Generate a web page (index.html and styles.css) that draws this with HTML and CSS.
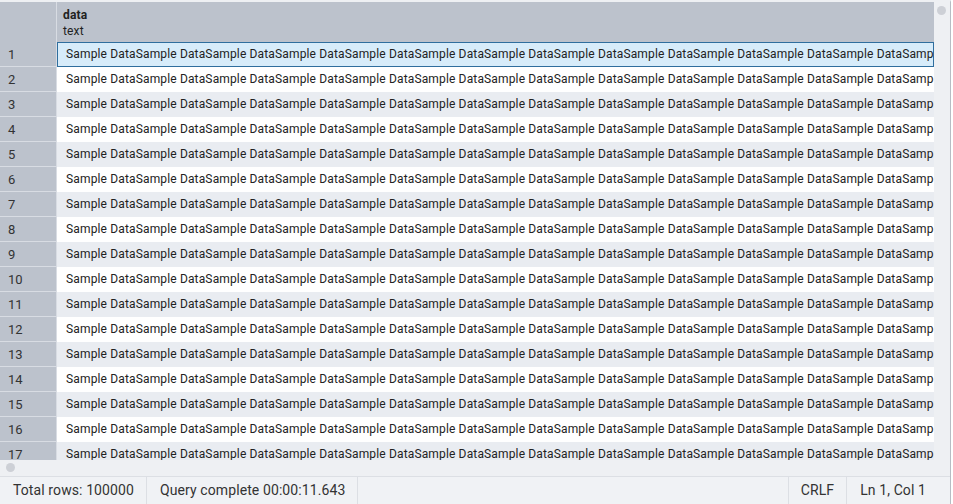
FILE: index.html
```html
<!DOCTYPE html>
<html lang="en">
<head>
    <meta charset="UTF-8">
    <title>Query result</title>
    <link rel="stylesheet" href="styles.css">
</head>
<body>
    <div class="app">
        <div class="grid-area">
            <div class="grid">
                <div class="grid-head">
                    <div class="corner"></div>
                    <div class="col-head">
                        <div class="col-name">data</div>
                        <div class="col-type">text</div>
                    </div>
                </div>
                <div class="rows">
                    <div class="row selected"><div class="num">1</div><div class="cell">Sample DataSample DataSample DataSample DataSample DataSample DataSample DataSample DataSample DataSample DataSample DataSample DataSample DataSample Data</div></div>
                    <div class="row"><div class="num">2</div><div class="cell">Sample DataSample DataSample DataSample DataSample DataSample DataSample DataSample DataSample DataSample DataSample DataSample DataSample DataSample Data</div></div>
                    <div class="row"><div class="num">3</div><div class="cell">Sample DataSample DataSample DataSample DataSample DataSample DataSample DataSample DataSample DataSample DataSample DataSample DataSample DataSample Data</div></div>
                    <div class="row"><div class="num">4</div><div class="cell">Sample DataSample DataSample DataSample DataSample DataSample DataSample DataSample DataSample DataSample DataSample DataSample DataSample DataSample Data</div></div>
                    <div class="row"><div class="num">5</div><div class="cell">Sample DataSample DataSample DataSample DataSample DataSample DataSample DataSample DataSample DataSample DataSample DataSample DataSample DataSample Data</div></div>
                    <div class="row"><div class="num">6</div><div class="cell">Sample DataSample DataSample DataSample DataSample DataSample DataSample DataSample DataSample DataSample DataSample DataSample DataSample DataSample Data</div></div>
                    <div class="row"><div class="num">7</div><div class="cell">Sample DataSample DataSample DataSample DataSample DataSample DataSample DataSample DataSample DataSample DataSample DataSample DataSample DataSample Data</div></div>
                    <div class="row"><div class="num">8</div><div class="cell">Sample DataSample DataSample DataSample DataSample DataSample DataSample DataSample DataSample DataSample DataSample DataSample DataSample DataSample Data</div></div>
                    <div class="row"><div class="num">9</div><div class="cell">Sample DataSample DataSample DataSample DataSample DataSample DataSample DataSample DataSample DataSample DataSample DataSample DataSample DataSample Data</div></div>
                    <div class="row"><div class="num">10</div><div class="cell">Sample DataSample DataSample DataSample DataSample DataSample DataSample DataSample DataSample DataSample DataSample DataSample DataSample DataSample Data</div></div>
                    <div class="row"><div class="num">11</div><div class="cell">Sample DataSample DataSample DataSample DataSample DataSample DataSample DataSample DataSample DataSample DataSample DataSample DataSample DataSample Data</div></div>
                    <div class="row"><div class="num">12</div><div class="cell">Sample DataSample DataSample DataSample DataSample DataSample DataSample DataSample DataSample DataSample DataSample DataSample DataSample DataSample Data</div></div>
                    <div class="row"><div class="num">13</div><div class="cell">Sample DataSample DataSample DataSample DataSample DataSample DataSample DataSample DataSample DataSample DataSample DataSample DataSample DataSample Data</div></div>
                    <div class="row"><div class="num">14</div><div class="cell">Sample DataSample DataSample DataSample DataSample DataSample DataSample DataSample DataSample DataSample DataSample DataSample DataSample DataSample Data</div></div>
                    <div class="row"><div class="num">15</div><div class="cell">Sample DataSample DataSample DataSample DataSample DataSample DataSample DataSample DataSample DataSample DataSample DataSample DataSample DataSample Data</div></div>
                    <div class="row"><div class="num">16</div><div class="cell">Sample DataSample DataSample DataSample DataSample DataSample DataSample DataSample DataSample DataSample DataSample DataSample DataSample DataSample Data</div></div>
                    <div class="row"><div class="num">17</div><div class="cell">Sample DataSample DataSample DataSample DataSample DataSample DataSample DataSample DataSample DataSample DataSample DataSample DataSample DataSample Data</div></div>
                </div>
                <div class="hscroll"><span class="thumb"></span></div>
            </div>
            <div class="vscroll"><span class="thumb"></span></div>
        </div>
        <div class="statusbar">
            <div class="status-item">Total rows: 100000</div>
            <div class="status-item">Query complete 00:00:11.643</div>
            <div class="status-spacer"></div>
            <div class="status-item">CRLF</div>
            <div class="status-item last">Ln 1, Col 1</div>
        </div>
    </div>
</body>
</html>
```

FILE: styles.css
```css
html, body {
    margin: 0;
    padding: 0;
    background: #ffffff;
}
body {
    font-family: Roboto, "Liberation Sans", Arial, sans-serif;
    color: #212529;
}
.app {
    width: 951px;
    height: 504px;
    display: flex;
    flex-direction: column;
    border-right: 1px solid #b8bcc4;
    border-top: 2px solid #eef0f3;
    box-sizing: border-box;
    background: #eef0f3;
}
.grid-area {
    flex: 1;
    display: flex;
    min-height: 0;
}
.grid {
    flex: 1;
    display: flex;
    flex-direction: column;
    min-width: 0;
    overflow: hidden;
}
.grid-head {
    display: flex;
    height: 40px;
    background: #bcc2cc;
    flex-shrink: 0;
}
.corner {
    width: 56px;
    border-right: 1px solid #d8dce3;
}
.col-head {
    flex: 1;
    padding: 5px 6px;
    font-size: 12px;
    line-height: 16px;
    color: #222;
    letter-spacing: 0.15px;
}
.col-name {
    font-weight: bold;
}
.rows {
    flex: 1;
    overflow: hidden;
    background: #ffffff;
}
.row {
    display: flex;
    height: 25px;
    font-size: 12px;
    line-height: 25px;
}
.row:nth-child(odd) .cell {
    background: #e9ecf1;
}
.num {
    width: 57px;
    flex-shrink: 0;
    box-sizing: border-box;
    padding-left: 8px;
    background: #bcc2cc;
    border-right: 1px solid #d8dce3;
    border-bottom: 1px solid #d8dce3;
    color: #333;
    font-size: 13px;
}
.cell {
    flex: 1;
    box-sizing: border-box;
    padding-left: 9px;
    white-space: nowrap;
    overflow: hidden;
    color: #222;
    background: #ffffff;
    letter-spacing: 0.15px;
}
.row.selected .cell {
    background: #d7ecfa;
    border: 1px solid #2f6e9e;
    padding-left: 8px;
    line-height: 23px;
}
.hscroll {
    height: 16px;
    flex-shrink: 0;
    background: #eef0f3;
    position: relative;
}
.vscroll {
    width: 16px;
    background: #eef0f3;
    position: relative;
}
.thumb {
    position: absolute;
    width: 9px;
    height: 9px;
    border-radius: 50%;
    background: #cdd0d6;
}
.hscroll .thumb {
    left: 6px;
    top: 3px;
}
.vscroll .thumb {
    left: 3px;
    top: 4px;
}
.statusbar {
    height: 27px;
    flex-shrink: 0;
    display: flex;
    align-items: stretch;
    border-top: 1px solid #dcdfe4;
    background: #f0f2f5;
    font-size: 14px;
    color: #333;
    letter-spacing: 0.1px;
}
.status-item {
    padding: 0 12px 0 13px;
    line-height: 26px;
    border-right: 1px solid #dcdfe4;
}
.status-item.last {
    border-right: none;
    padding-right: 24px;
}
.status-spacer {
    flex: 1;
    border-right: 1px solid #dcdfe4;
    margin-right: -1px;
}
```
